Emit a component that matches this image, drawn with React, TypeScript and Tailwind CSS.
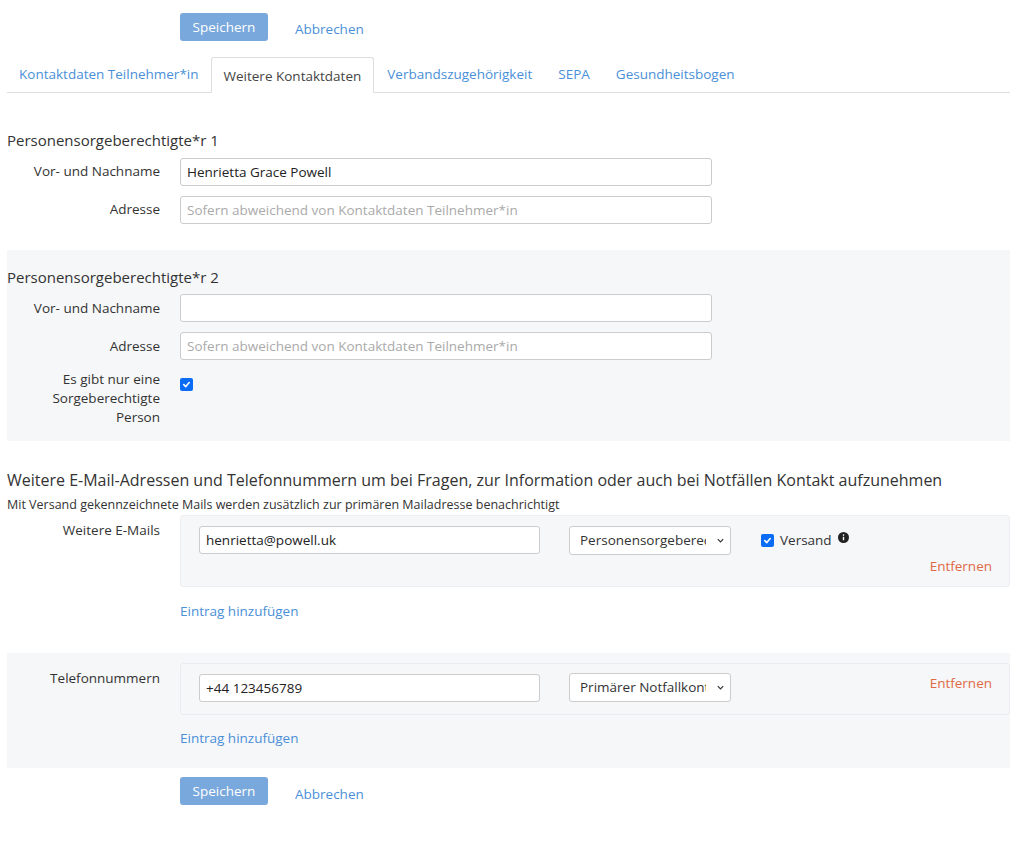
import React from "react";

const lbl = "w-[153px] shrink-0 text-right text-[13.5px] text-[#333]";
const inp = "h-[28px] w-[532px] rounded-[3px] border border-[#ccc] bg-white px-[6px] text-[13.5px] text-[#222] placeholder-[#aaa] outline-none";

function Check() {
  return (
    <span className="inline-flex h-[13px] w-[13px] items-center justify-center rounded-[2px] bg-[#0b6cf5]">
      <svg width="9" height="9" viewBox="0 0 10 10"><path d="M2 5.2 L4.2 7.3 L8 2.8" fill="none" stroke="white" strokeWidth="1.8" strokeLinecap="round" strokeLinejoin="round" /></svg>
    </span>
  );
}

function Select({ text }: { text: string }) {
  return (
    <div className="flex h-[29px] w-[162px] items-center justify-between rounded-[3px] border border-[#ccc] bg-white pl-[10px] pr-[5px] text-[13.5px] text-[#333]">
      <span className="overflow-hidden whitespace-nowrap w-[126px]">{text}</span>
      <svg width="9" height="9" viewBox="0 0 10 10"><path d="M2 3.5 L5 6.5 L8 3.5" fill="none" stroke="#333" strokeWidth="1.3" /></svg>
    </div>
  );
}

function Buttons() {
  return (
    <div className="flex items-center pl-[173px]">
      <button className="h-[28px] w-[88px] rounded-[3px] bg-[#79a8dc] text-[13.5px] text-white">Speichern</button>
      <span className="ml-[27px] mt-[5px] text-[13.5px] text-[#4a8fd8]">Abbrechen</span>
    </div>
  );
}

export default function App() {
  return (
    <div className="w-[1024px] h-[844px] bg-white pt-[13px] pl-[7px] pr-[14px]" style={{ fontFamily: '"Open Sans", "Noto Sans", sans-serif' }}>
      <Buttons />
      <div className="mt-[16px] flex h-[36px] items-end border-b border-[#ddd] text-[13.5px]">
        <div className="px-[12px] pb-[8px] text-[#4a8fd8]">Kontaktdaten Teilnehmer*in</div>
        <div className="-mb-px h-[36px] rounded-t-[3px] border border-b-white border-[#ddd] bg-white px-[12px] pt-[8px] text-[#444]">Weitere Kontaktdaten</div>
        <div className="px-[13px] pb-[8px] text-[#4a8fd8]">Verbandszugehörigkeit</div>
        <div className="px-[13px] pb-[8px] text-[#4a8fd8]">SEPA</div>
        <div className="px-[13px] pb-[8px] text-[#4a8fd8]">Gesundheitsbogen</div>
      </div>

      <div className="pt-[36px] pb-[26px]">
        <div className="text-[15px] text-[#333]">Personensorgeberechtigte*r 1</div>
        <div className="mt-[6px] flex items-center gap-[20px]"><div className={lbl}>Vor- und Nachname</div><input className={inp} defaultValue="Henrietta Grace Powell" /></div>
        <div className="mt-[10px] flex items-center gap-[20px]"><div className={lbl}>Adresse</div><input className={inp} placeholder="Sofern abweichend von Kontaktdaten Teilnehmer*in" /></div>
      </div>

      <div className="bg-[#f6f7f9] pt-[16px] pb-[14px]">
        <div className="text-[15px] text-[#333]">Personensorgeberechtigte*r 2</div>
        <div className="mt-[6px] flex items-center gap-[20px]"><div className={lbl}>Vor- und Nachname</div><input className={inp} /></div>
        <div className="mt-[10px] flex items-center gap-[20px]"><div className={lbl}>Adresse</div><input className={inp} placeholder="Sofern abweichend von Kontaktdaten Teilnehmer*in" /></div>
        <div className="mt-[10px] flex items-start gap-[20px]"><div className={lbl + " leading-[19px]"}>Es gibt nur eine<br />Sorgeberechtigte<br />Person</div><div className="pt-[1px]"><Check /></div></div>
      </div>

      <div className="pt-[27px]">
        <div className="text-[16px] text-[#333]">Weitere E-Mail-Adressen und Telefonnummern um bei Fragen, zur Information oder auch bei Notfällen Kontakt aufzunehmen</div>
        <div className="mt-[4px] text-[12.5px] text-[#333]">Mit Versand gekennzeichnete Mails werden zusätzlich zur primären Mailadresse benachrichtigt</div>
        <div className="flex items-start gap-[20px]">
          <div className={lbl + " pt-[5px]"}>Weitere E-Mails</div>
          <div className="flex-1">
            <div className="h-[72px] rounded-[3px] border border-[#eceef1] bg-[#f6f7f9] pl-[18px] pr-[17px] pt-[10px]">
              <div className="flex items-center">
                <input className="h-[28px] w-[341px] rounded-[3px] border border-[#ccc] bg-white px-[6px] text-[13.5px] text-[#222] outline-none" defaultValue="henrietta@powell.uk" />
                <div className="ml-[29px]"><Select text="Personensorgeberechtigte" /></div>
                <div className="ml-[30px] flex items-center gap-[6px] text-[13.5px] text-[#333]"><Check />Versand
                  <svg width="11" height="11" viewBox="0 0 16 16" className="-mt-[6px]"><circle cx="8" cy="8" r="8" fill="#222" /><rect x="7" y="7" width="2" height="5" fill="white" /><circle cx="8" cy="4.5" r="1.2" fill="white" /></svg>
                </div>
              </div>
              <div className="mt-[1px] text-right text-[13.5px] text-[#e06a45]">Entfernen</div>
            </div>
            <div className="mt-[14px] text-[13.5px] text-[#4a8fd8]">Eintrag hinzufügen</div>
          </div>
        </div>
      </div>

      <div className="mt-[32px] bg-[#f6f7f9] pt-[10px] pb-[20px]">
        <div className="flex items-start gap-[20px]">
          <div className={lbl + " pt-[5px]"}>Telefonnummern</div>
          <div className="flex-1">
            <div className="h-[52px] rounded-[3px] border border-[#eaecef] bg-[#f6f7f9] pl-[18px] pr-[17px] pt-[9px]">
              <div className="flex items-center">
                <input className="h-[28px] w-[341px] rounded-[3px] border border-[#ccc] bg-white px-[6px] text-[13.5px] text-[#222] outline-none" defaultValue="+44 123456789" />
                <div className="ml-[29px]"><Select text="Primärer Notfallkontakt" /></div>
                <div className="-mt-[8px] flex-1 text-right text-[13.5px] text-[#e06a45]">Entfernen</div>
              </div>
            </div>
            <div className="mt-[13px] text-[13.5px] text-[#4a8fd8]">Eintrag hinzufügen</div>
          </div>
        </div>
      </div>

      <div className="mt-[9px]"><Buttons /></div>
    </div>
  );
}
